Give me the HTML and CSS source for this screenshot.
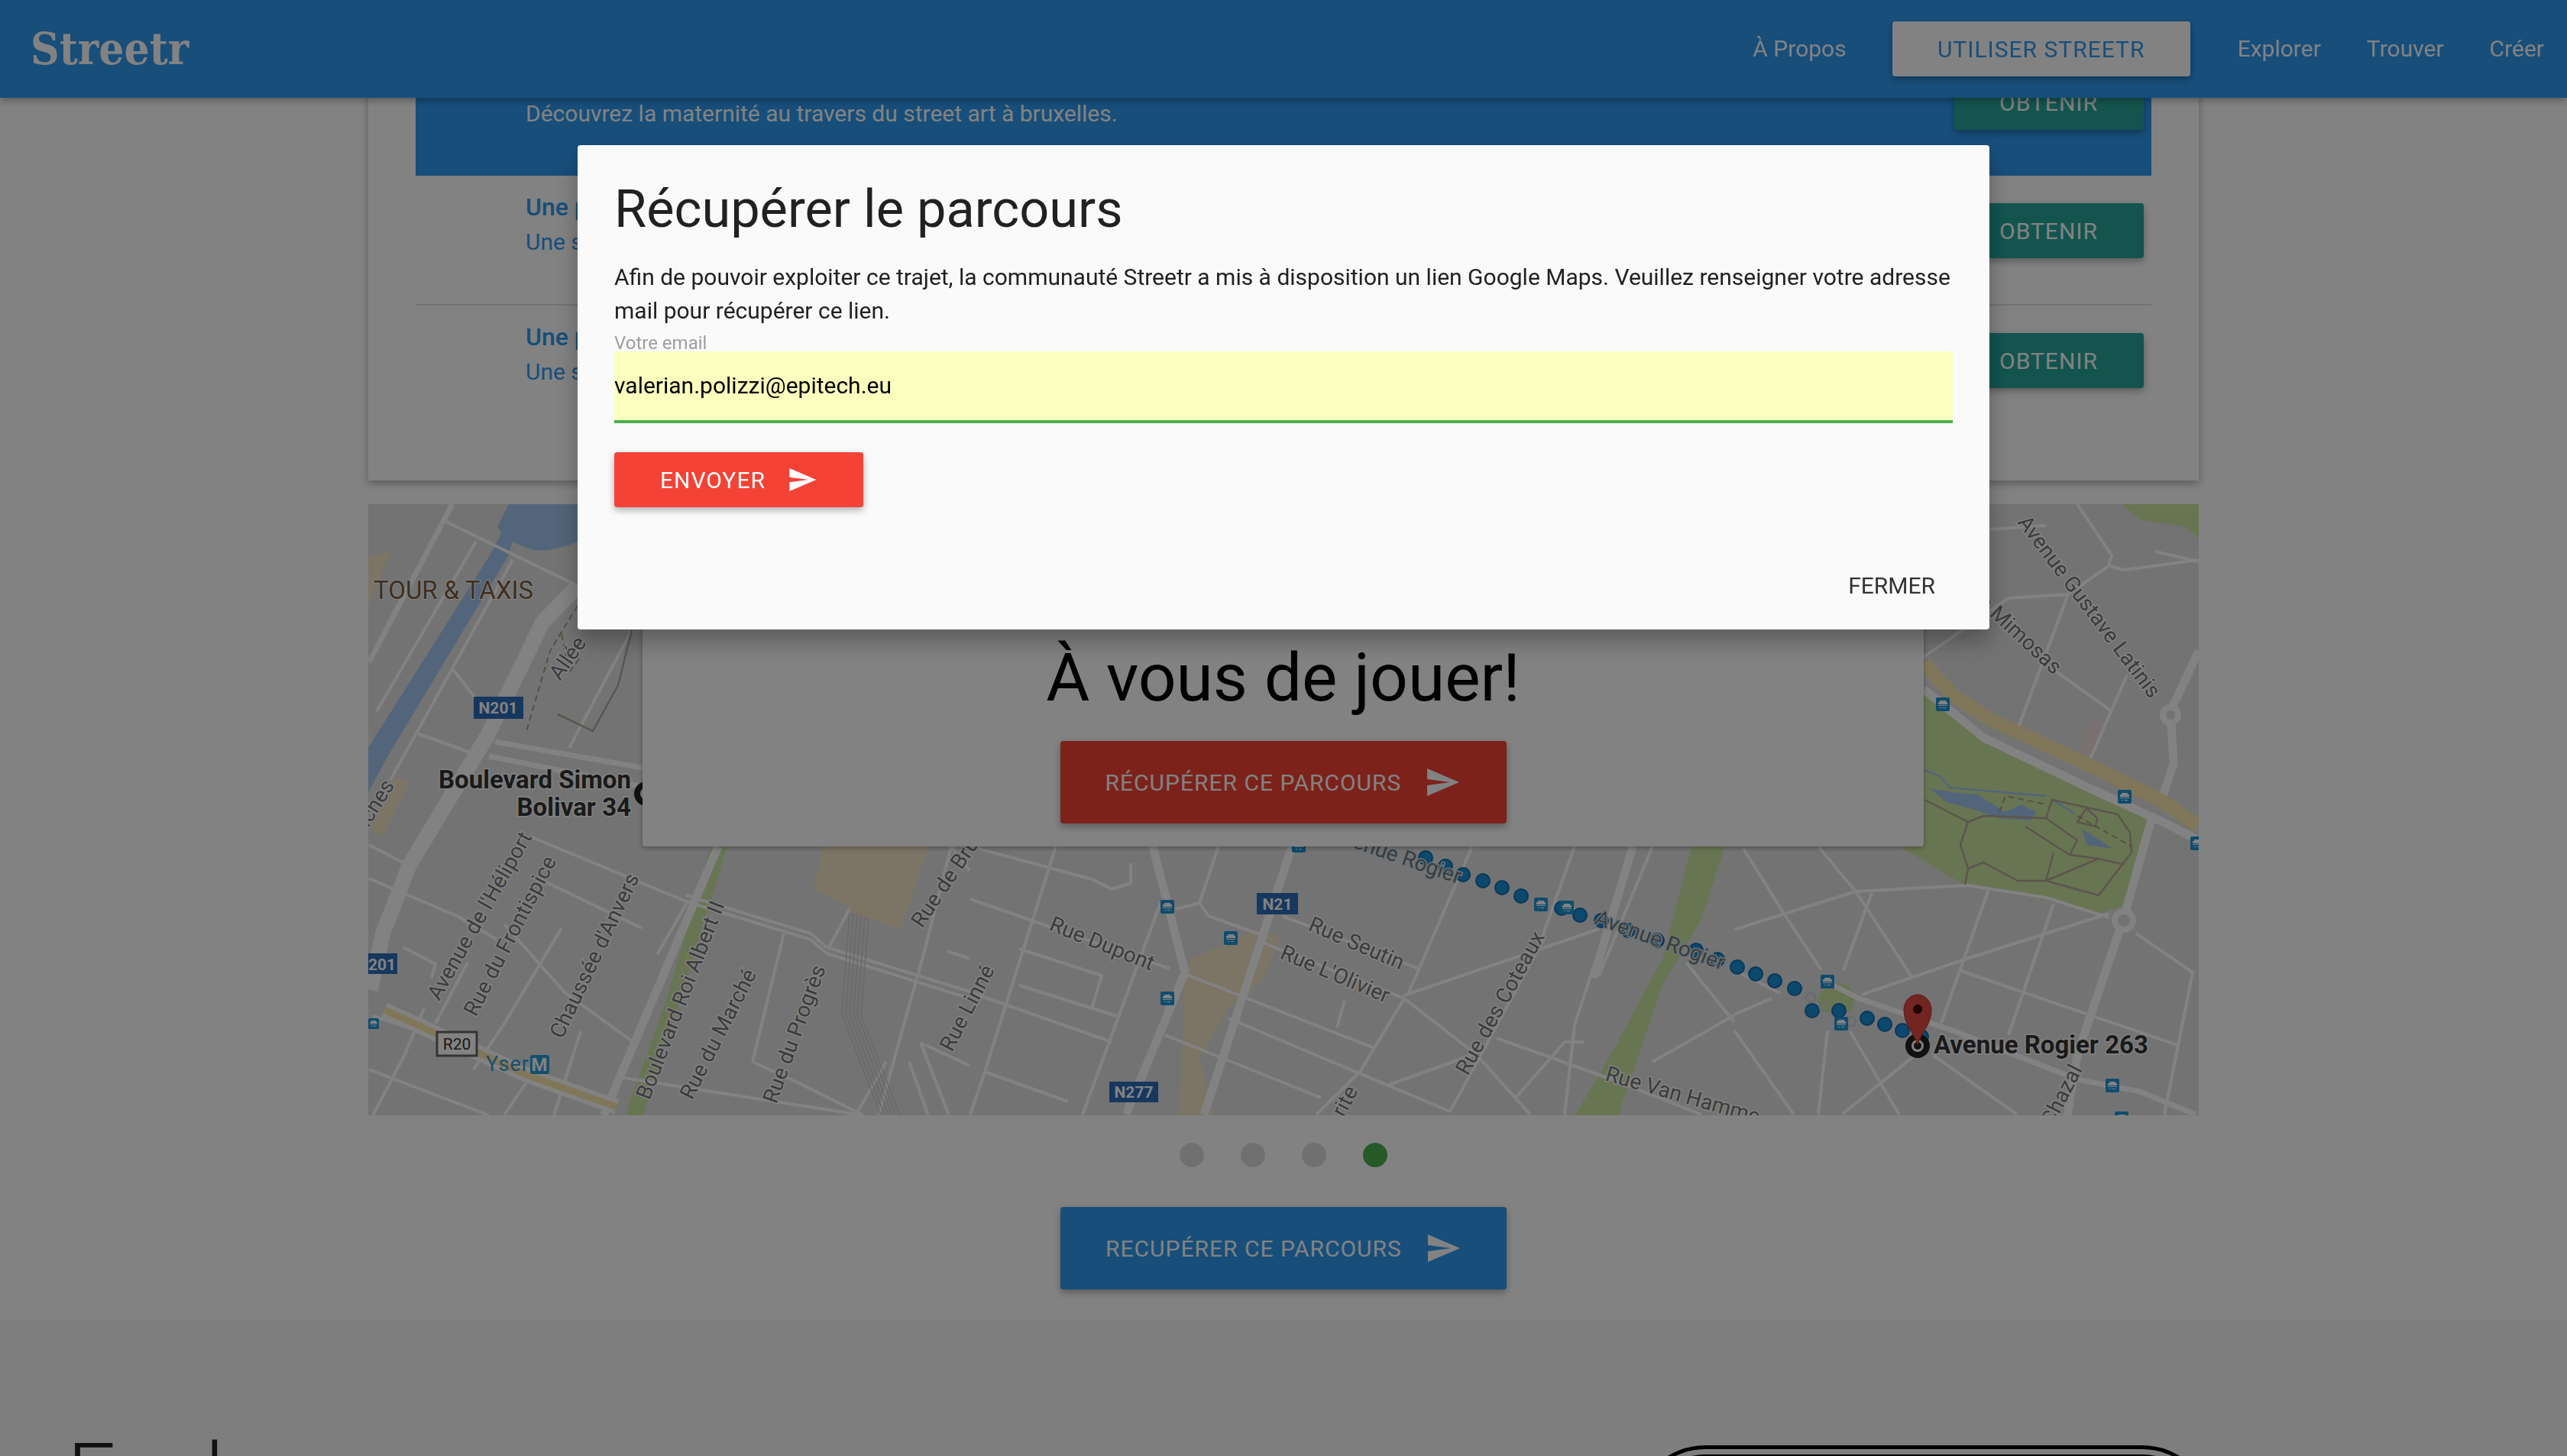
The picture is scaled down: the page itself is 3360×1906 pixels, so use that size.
FILE: index.html
```html
<!DOCTYPE html>
<html lang="fr">
<head>
<meta charset="utf-8">
<title>Streetr</title>
<link rel="stylesheet" href="styles.css">
</head>
<body>
<svg class="defs" width="0" height="0">
  <symbol id="send" viewBox="0 0 24 24"><path d="M2.01 21L2 14l15-2-15-2 .01-7L23 12z"/></symbol>
  <symbol id="transit" viewBox="0 0 18 18"><rect width="18" height="18" rx="2" fill="#1f95d6"/><path d="M5 4h8v2h2v3H3V6h2zM3 10h12v1H3zM5 13h2v1H5zM9 13h4v1H9z" fill="#fff"/></symbol>
</svg>

<header class="navbar">
  <a class="brand">Streetr</a>
  <nav class="nav-links">
    <a class="nav-link">À Propos</a>
    <a class="nav-cta">UTILISER STREETR</a>
    <a class="nav-link">Explorer</a>
    <a class="nav-link">Trouver</a>
    <a class="nav-link">Créer</a>
  </nav>
</header>

<main class="content">
  <section class="list-card">
    <div class="row row-active">
      <div class="row-text">
        <div class="row-title">Une balade</div>
        <div class="row-desc">Découvrez la maternité au travers du street art à bruxelles.</div>
      </div>
      <a class="btn btn-teal">OBTENIR</a>
    </div>
    <div class="row row-divided">
      <div class="row-text">
        <div class="row-title">Une promenade</div>
        <div class="row-desc">Une sortie</div>
      </div>
      <a class="btn btn-teal">OBTENIR</a>
    </div>
    <div class="row">
      <div class="row-text">
        <div class="row-title">Une promenade</div>
        <div class="row-desc">Une sortie</div>
      </div>
      <a class="btn btn-teal">OBTENIR</a>
    </div>
  </section>

  <section class="map">
    <svg class="map-svg" viewBox="482 660 2396 800" width="2396" height="800">
      <rect class="land" x="482" y="660" width="2396" height="800"/>
      <!-- areas -->
      <path class="water" d="M482 1037V979L646 719 656 698 651 690 666 660H756V709C735 718 715 722 700 720 690 718 680 714 671 709L664 730 511 984Z"/>
      <path class="park" d="M2518 902L2597 966 2817 1069 2780 1185 2743 1198 2690 1180 2572 1159 2486 1108H2518ZM2778 660H2878V706L2862 690 2800 680ZM2061 1460L2099 1398 2176 1255 2214 1108H2258L2227 1203 2176 1290 2118 1460ZM822 1449L873 1307 929 1111 952 1108 914 1232 842 1460H820ZM2380 1316C2376 1300 2395 1285 2410 1287 2425 1290 2430 1305 2425 1320 2410 1333 2390 1330 2380 1316Z"/>
      <path class="sand" d="M1551 1275L1560 1255 1646 1216 1678 1227 1653 1281 1608 1320 1570 1385 1589 1460H1544ZM1077 1108L1064 1164 1107 1185 1115 1195 1179 1217 1215 1108ZM482 730L512 722 482 790ZM512 1015L536 1024 500 1095 482 1082Z"/>
      <path class="pink" d="M2718 990L2738 943 2754 948 2733 1000Z"/>
      <!-- roads -->
      <path class="r" d="M582 682L756 767M623 709L493 931M671 733L511 1021M483 1106L539 1135M592 875L623 915M546 960L618 986M745 979L827 825M694 1095L898 1180M898 1180L1061 1230 1082 1248 1269 1307M705 1150L840 1215M483 1150L600 1200 650 1230M528 1240L570 1262 565 1280M660 1210L740 1300 826 1362M735 1215L660 1340 620 1400M555 1320L530 1380 488 1460M580 1360L488 1330M690 1415L660 1460M483 1400L640 1460M612 1260L570 1340M760 1350L725 1460M900 1180L860 1250M1026 1222L985 1390M985 1390L1050 1420 1130 1460M1112 1190L1085 1240M810 1410L1130 1460M1245 1108L1210 1245 1150 1460M1269 1140L1245 1108M1240 1245L1269 1255M1205 1365L1269 1395M1160 1390L1120 1460M1190 1390L1215 1460M1205 1365L1242 1460M898 1172L1061 1222 1082 1240 1269 1298"/>
      <path class="r" d="M1270 1108L1429 1151 1455 1164 1480 1156 1480 1130M1270 1177L1531 1268M1551 1275L1799 1372M1525 1355L1729 1437M1608 1333L1898 1455M1270 1299L1455 1364M1334 1242L1442 1277 1429 1320M1334 1290L1465 1331M1289 1403L1398 1442M1382 1108L1289 1403 1270 1459M1519 1182L1417 1459M1595 1108L1570 1182 1582 1199 1659 1227M1538 1190L1570 1182M1678 1199L1857 1268M1653 1234L1838 1307M1838 1307L1933 1381 2003 1459M1838 1307L1780 1403 1723 1459M1838 1303L2093 1216M1927 1108L1844 1299M2061 1108L2016 1234M2023 1225L1898 1455M1818 1420L1927 1381M1959 1359L2118 1416 2227 1459M1984 1437L2048 1364 2073 1364M2048 1459L2061 1342 2137 1108M2163 1108L2093 1277M2163 1390L2270 1329M2207 1260L2270 1338M1760 1310L1750 1345"/>
      <path class="r" d="M2270 1217L2429 1167 2576 1159 2678 1175 2760 1201M2270 1328L2319 1307M2282 1111L2335 1196 2384 1270M2380 1108L2429 1167 2503 1280M2450 1169L2413 1270M2437 1302L2568 1257 2760 1196M2603 1164L2541 1339M2688 1183L2629 1355M2564 1270L2850 1368M2796 1222L2870 1273 2833 1459M2380 1459L2392 1349M2411 1459L2507 1381M2421 1349L2486 1459M2270 1349L2348 1459M2518 860L2629 783 2707 778 2760 741 2764 727 2719 660M2762 741L2780 746 2878 733M2707 778L2639 960M2690 878L2764 931M2784 884L2733 1000M2605 693L2678 688M2821 722L2878 735M2330 1300L2270 1270M2530 1381L2640 1459"/>
      <path class="m" d="M648 971L841 1005M640 990L841 1030M592 660L483 867M2433 1307L2556 1349 2719 1413 2801 1429 2874 1459M2400 1290L2433 1307"/>
      <path class="t" d="M2878 852L2841 931 2845 1000 2829 1048M2817 1069L2780 1201 2719 1381 2706 1460M1509 1108L1551 1273 1474 1459M1691 1108L1576 1459M940 1108L790 1460M2137 1108L2086 1280M2518 902L2597 966 2731 1030 2829 1075 2878 1100"/>
      <path class="b" d="M756 767L710 815 638 963 536 1132 501 1222 485 1296"/>
      <circle class="ring" cx="2841" cy="936" r="10"/>
      <circle class="ring" cx="2780" cy="1205" r="12"/>
      <path class="yellow-edge" d="M503 1322L689 1407 807 1449"/>
      <path class="yellow" d="M503 1322L689 1407 807 1449"/>
      <path class="tan-road" d="M2518 868L2556 910 2605 942 2731 1000 2829 1048 2878 1082"/>
      <path class="lake" d="M2525 1032L2556 1037 2588 1040 2625 1063 2645 1053 2666 1063 2658 1074 2617 1071 2588 1061 2548 1050ZM2725 1085L2766 1111 2731 1106Z"/>
      <path class="stream" d="M2519 1008L2539 1016 2552 1031 2678 1042M2686 1047L2715 1065"/>
      <path class="park-path" d="M2519 1047L2576 1076 2596 1068 2678 1071 2686 1047 2772 1066 2788 1090 2790 1116 2747 1172 2678 1153 2641 1153 2596 1129 2576 1137 2566 1106 2576 1076M2651 1082L2709 1119 2719 1100 2678 1071M2688 1116L2678 1153 2747 1124 2780 1132M2709 1119L2747 1124M2731 1058L2745 1071 2743 1082 2719 1076 2731 1058M2576 1137L2572 1158"/>
      <path class="rail" d="M1112 1195L1102 1328 1153 1460M1117 1195L1107 1328 1158 1460M1122 1195L1112 1328 1163 1460M1127 1198L1117 1328 1168 1460M1132 1200L1122 1328 1173 1460M1137 1202L1127 1328 1178 1460"/>
      <path class="dash" d="M756 793L720 852 689 957M735 830L745 880 760 860M2617 1063L2625 1042 2678 1053M2719 1068L2790 1108"/>
      <path class="park-path" d="M827 825L809 897 776 957 730 935"/>

      <!-- labels -->
      <text class="area" x="489" y="784">TOUR &amp; TAXIS</text>
      <text class="street" transform="translate(733 892) rotate(-55)">Allée</text>
      <text class="street" text-anchor="end" transform="translate(517 1028) rotate(-58)">Quai des Péniches</text>
      <text class="street" transform="translate(575 1311) rotate(-60.5)">Avenue de l'Héliport</text>
      <text class="street" transform="translate(623 1332) rotate(-62.7)">Rue du Frontispice</text>
      <text class="street" transform="translate(736 1361) rotate(-64.5)">Chaussée d'Anvers</text>
      <text class="street" transform="translate(850 1441) rotate(-69)">Boulevard Roi Albert II</text>
      <text class="street" transform="translate(906 1441) rotate(-63)">Rue du Marché</text>
      <text class="street" transform="translate(1016 1446) rotate(-70)">Rue du Progrès</text>
      <text class="street" transform="translate(1207 1216) rotate(-56)">Rue de Bruxelles</text>
      <text class="street" transform="translate(1246 1378) rotate(-62.6)">Rue Linné</text>
      <text class="street" transform="translate(1372 1217) rotate(21.8)">Rue Dupont</text>
      <text class="street" transform="translate(1711 1217) rotate(23.4)">Rue Seutin</text>
      <text class="street" transform="translate(1674 1254) rotate(22.9)">Rue L'Olivier</text>
      <text class="street" transform="translate(1921 1409) rotate(-61)">Rue des Coteaux</text>
      <text class="street" transform="translate(2100 1414) rotate(16)">Rue Van Hamme</text>
      <text class="street" text-anchor="end" transform="translate(1778 1428) rotate(-62)">Rue de la Marguerite</text>
      <text class="street" text-anchor="end" transform="translate(2688 884) rotate(43)">Rue des Mimosas</text>
      <text class="street" transform="translate(2640 684) rotate(53)">Avenue Gustave Latinis</text>
      <text class="street" text-anchor="end" transform="translate(2726 1400) rotate(-63)">Rue Chazal</text>
      <g class="shield-blue"><rect x="620" y="912" width="65" height="29"/><rect x="480" y="1248" width="40" height="27"/><rect x="1645" y="1169" width="54" height="28"/><rect x="1452" y="1416" width="64" height="27"/></g>
      <text class="shield-text" x="652" y="934" text-anchor="middle">N201</text>
      <text class="shield-text" x="500" y="1270" text-anchor="middle">201</text>
      <text class="shield-text" x="1672" y="1191" text-anchor="middle">N21</text>
      <text class="shield-text" x="1484" y="1437" text-anchor="middle">N277</text>
      <rect class="shield-white" x="572" y="1351" width="52" height="31"/>
      <text class="shield-dark" x="598" y="1374" text-anchor="middle">R20</text>
      <text class="metro" x="636" y="1402" >Yser</text>
      <rect class="metro-box" x="694" y="1381" width="25" height="25" rx="3"/>
      <text class="metro-m" x="706" y="1402" text-anchor="middle">M</text>

      <!-- transit stops -->
      <use href="#transit" x="1519" y="1178" width="18" height="18"/>
      <use href="#transit" x="1602" y="1219" width="18" height="18"/>
      <use href="#transit" x="1519" y="1298" width="18" height="18"/>
      <use href="#transit" x="1691" y="1098" width="18" height="18"/>
      <use href="#transit" x="2534" y="913" width="18" height="18"/>
      <use href="#transit" x="2772" y="1034" width="18" height="18"/>
      <use href="#transit" x="2867" y="1095" width="18" height="18"/>
      <use href="#transit" x="2756" y="1412" width="18" height="18"/>
      <use href="#transit" x="2768" y="1455" width="18" height="18"/>
      <use href="#transit" x="482" y="1332" width="14" height="16"/>

      <!-- route -->
      <g class="route">
        <circle cx="1866" cy="1123" r="9"/><circle cx="1892" cy="1134" r="9"/><circle cx="1915" cy="1145" r="9"/><circle cx="1941" cy="1153" r="9"/><circle cx="1966" cy="1162" r="9"/><circle cx="1991" cy="1173" r="9"/><circle cx="2044" cy="1189" r="9"/><circle cx="2068" cy="1198" r="9"/><circle cx="2096" cy="1205" r="9"/><circle cx="2131" cy="1218" r="9"/><circle cx="2169" cy="1231" r="9"/><circle cx="2220" cy="1244" r="9"/><circle cx="2248" cy="1256" r="9"/><circle cx="2274" cy="1266" r="9"/><circle cx="2298" cy="1275" r="9"/><circle cx="2323" cy="1284" r="9"/><circle cx="2349" cy="1294" r="9"/><circle cx="2372" cy="1323" r="9"/><circle cx="2407" cy="1323" r="9"/><circle cx="2444" cy="1333" r="9"/><circle cx="2467" cy="1341" r="9"/><circle cx="2490" cy="1349" r="9"/><circle cx="2515" cy="1357" r="9"/>
      </g>
      <g class="stop-dots"><circle cx="2370" cy="1306" r="6"/><circle cx="2388" cy="1318" r="6"/><circle cx="2423" cy="1337" r="6"/></g>
      <use href="#transit" x="2008" y="1175" width="18" height="18"/>
      <use href="#transit" x="2042" y="1179" width="18" height="18"/>
      <use href="#transit" x="2383" y="1276" width="18" height="18"/>
      <use href="#transit" x="2401" y="1331" width="18" height="18"/>
      <text class="street street-blue" transform="translate(1740 1099) rotate(19)">Avenue Rogier</text>
      <text class="street street-blue" transform="translate(2086 1209) rotate(20)">Avenue Rogier</text>

      <!-- end points -->
      <circle class="target" cx="846" cy="1039" r="12"/>
      <circle class="target" cx="2510" cy="1369" r="12"/>
      <circle class="target-dot" cx="2510" cy="1369" r="5"/>
      <path class="pin" d="M2510 1368C2506 1352 2492 1342 2492 1322 2492 1311 2500 1302 2510 1302 2520 1302 2528 1311 2528 1322 2528 1342 2514 1352 2510 1368Z"/>
      <circle class="pin-eye" cx="2510" cy="1321" r="6"/>
      <text class="place" x="2531" y="1379">Avenue Rogier 263</text>
      <text class="place" x="826" y="1032" text-anchor="end">Boulevard Simon</text>
      <text class="place" x="826" y="1068" text-anchor="end">Bolivar 34</text>
    </svg>

    <div class="cta-card">
      <h2 class="cta-title">À vous de jouer!</h2>
      <a class="btn btn-large btn-red">RÉCUPÉRER CE PARCOURS <svg class="send send-large"><use href="#send"/></svg></a>
    </div>
  </section>

  <div class="dots">
    <span class="dot"></span><span class="dot"></span><span class="dot"></span><span class="dot dot-active"></span>
  </div>

  <div class="center-action">
    <a class="btn btn-large btn-blue">RECUPÉRER CE PARCOURS <svg class="send send-large"><use href="#send"/></svg></a>
  </div>
</main>

<section class="explore">
  <h2 class="explore-title">Explorer</h2>
  <div class="device"><div class="device-inner"></div></div>
</section>

<div class="overlay"></div>

<div class="modal">
  <div class="modal-body">
    <h4 class="modal-title">Récupérer le parcours</h4>
    <p class="modal-text">Afin de pouvoir exploiter ce trajet, la communauté Streetr a mis à disposition un lien Google Maps. Veuillez renseigner votre adresse mail pour récupérer ce lien.</p>
    <label class="field-label">Votre email</label>
    <div class="field-input">valerian.polizzi@epitech.eu</div>
    <a class="btn btn-send">ENVOYER <svg class="send"><use href="#send"/></svg></a>
  </div>
  <div class="modal-footer"><a class="modal-close">FERMER</a></div>
</div>
</body>
</html>
```
FILE: styles.css
```css
* { box-sizing: border-box; }
html, body { margin: 0; padding: 0; height: 1906px; overflow: hidden; }
body {
  width: 3360px;
  background: #fff;
  font-family: Roboto, "Noto Sans", sans-serif;
  color: #000;
}
.defs { position: absolute; }

/* navbar */
.navbar {
  position: fixed;
  top: 0; left: 0; right: 0;
  height: 128px;
  display: flex;
  align-items: center;
  justify-content: space-between;
  padding: 0 30px 0 40px;
  background: #2e9af0;
  color: #fff;
  box-shadow: 0 4px 10px rgba(0,0,0,.3);
  z-index: 5;
}
.brand {
  font-family: "DejaVu Serif Condensed", "DejaVu Serif", serif;
  font-size: 58px;
  font-weight: 700;
  line-height: 132px;
}
.nav-links { display: flex; align-items: center; padding-bottom: 2px; }
.nav-link { font-size: 30px; margin-left: 60px; }
.nav-cta {
  width: 390px;
  height: 72px;
  margin-left: 60px;
  margin-right: 2px;
  margin-top: 2px;
  display: flex;
  align-items: center;
  justify-content: center;
  background: #fff;
  color: #2e9af0;
  border-radius: 4px;
  font-size: 30px;
  letter-spacing: 1px;
  box-shadow: 0 4px 10px rgba(0,0,0,.3);
}
.nav-cta + .nav-link { margin-left: 60px; }

/* main */
.content {
  width: 2396px;
  margin: 0 auto;
  padding-top: 62px;
}
.list-card {
  height: 567px;
  padding: 0 62px;
  background: #fff;
  box-shadow: 0 4px 10px rgba(0,0,0,.3);
}
.row {
  display: flex;
  justify-content: space-between;
  height: 168px;
  padding: 36px 10px 0 144px;
  color: #2e9af0;
}
.row-active { background: #2e9af0; color: #fff; }
.row-divided { height: 170px; border-bottom: 2px solid #e0e0e0; }
.row-text { margin-top: -18px; }
.row-title { font-size: 32px; font-weight: 500; line-height: 46px; }
.row-desc { font-size: 30px; line-height: 46px; }

.btn {
  display: flex;
  align-items: center;
  color: #fff;
  border-radius: 4px;
  font-size: 30px;
  letter-spacing: 1px;
  box-shadow: 0 4px 10px rgba(0,0,0,.3);
}
.btn-teal {
  width: 248px;
  height: 72px;
  padding-left: 59px;
  background: #26a69a;
}
.btn-large {
  width: 584px;
  height: 108px;
  padding-left: 59px;
}
.btn-red { background: #f44336; }
.btn-blue { background: #2e9af0; }
.send { width: 40px; height: 40px; fill: #fff; margin-left: 28px; }
.send-large { width: 48px; height: 48px; margin-left: 30px; }

/* map */
.map {
  position: relative;
  width: 2396px;
  height: 800px;
  margin-top: 31px;
  overflow: hidden;
}
.map-svg { display: block; fill: none; }
.land { fill: #e2e2e2; }
.water, .lake { fill: #a3c6f0; }
.park { fill: #cce5a1; }
.sand { fill: #f3e3c7; }
.pink { fill: #f0dcdc; }
.r, .m, .t, .b, .rail, .dash, .park-path, .yellow, .yellow-edge, .tan-road, .stream { fill: none; stroke-linejoin: round; }
.r { stroke: #fff; stroke-width: 4; }
.m { stroke: #fff; stroke-width: 7; }
.t { stroke: #fff; stroke-width: 11; }
.b { stroke: #fff; stroke-width: 20; }
.ring { fill: #e2e2e2; stroke: #fff; stroke-width: 8; }
.yellow-edge { stroke: #fff; stroke-width: 20; }
.yellow { stroke: #fce9af; stroke-width: 9; }
.tan-road { stroke: #fbe9b0; stroke-width: 18; }
.stream { stroke: #a3c6f0; stroke-width: 2.5; }
.park-path { stroke: #b5a898; stroke-width: 2.5; }
.rail { stroke: #cfcfcf; stroke-width: 1.5; }
.dash { stroke: #a8a080; stroke-width: 2; stroke-dasharray: 8 5; }
.area { font: 400 33px Roboto, sans-serif; fill: #7a5a3c; stroke: #fff; stroke-width: 2; paint-order: stroke; }
.street { font: 400 28px Roboto, sans-serif; fill: #757575; stroke: #fff; stroke-width: 3; paint-order: stroke; }
.street-blue { stroke: #d0e4f0; }
.place { font: 700 33px Roboto, sans-serif; fill: #333; stroke: #fff; stroke-width: 3; paint-order: stroke; }
.shield-blue rect { fill: #2c6db8; }
.shield-text { font: 700 21px Roboto, sans-serif; fill: #fff; }
.shield-white { fill: #fff; stroke: #666; stroke-width: 3; }
.shield-dark { font: 400 21px Roboto, sans-serif; fill: #333; }
.metro { font: 400 27px Roboto, sans-serif; fill: #2a9cd8; letter-spacing: 1px; }
.metro-box { fill: #2a9cd8; }
.metro-m { font: 700 24px Roboto, sans-serif; fill: #fff; }
.route circle { fill: #1a8ed6; stroke: #0f6fae; stroke-width: 2; }
.stop-dots circle { fill: none; stroke: #d5d5d5; stroke-width: 3; }
.target { fill: #fff; stroke: #222; stroke-width: 8; }
.target-dot { fill: #222; }
.pin { fill: #e04a42; stroke: #b53a33; stroke-width: 1; }
.pin-eye { fill: #3e0505; }

.cta-card {
  position: absolute;
  left: 359px;
  bottom: 352px;
  width: 1677px;
  height: 360px;
  display: flex;
  flex-direction: column;
  align-items: center;
  justify-content: flex-end;
  padding-bottom: 30px;
  background: #fff;
  border-radius: 4px;
  box-shadow: 0 2px 6px rgba(0,0,0,.3);
}
.cta-title {
  margin: 0 0 28px;
  font-size: 87.5px;
  font-weight: 400;
  line-height: 110px;
}

/* dots */
.dots {
  display: flex;
  justify-content: center;
  gap: 48px;
  margin-top: 36px;
}
.dot { width: 32px; height: 32px; border-radius: 50%; background: #dcdcdc; }
.dot-active { background: #4caf50; }
.center-action { display: flex; justify-content: center; margin-top: 52px; height: 148px; }

/* bottom section */
.explore {
  display: flex;
  justify-content: space-between;
  height: 178px;
  overflow: hidden;
  padding: 136px 463px 0 88px;
  background: #f8f8f8;
}
.explore-title { margin: 0; font-size: 112px; font-weight: 300; line-height: 132px; color: #222; }
.device {
  width: 758px;
  height: 400px;
  margin-top: 28px;
  padding: 7px;
  border: 5px solid #000;
  border-radius: 93px;
}
.device-inner { height: 100%; border: 5px solid #000; border-radius: 81px; }

/* modal */
.overlay {
  position: fixed;
  inset: 0;
  background: rgba(0,0,0,.49);
  z-index: 10;
}
.modal {
  position: fixed;
  left: 756px;
  top: 190px;
  width: 1848px;
  height: 634px;
  display: flex;
  flex-direction: column;
  justify-content: space-between;
  background: #fafafa;
  border-radius: 4px;
  box-shadow: 0 16px 30px rgba(0,0,0,.3);
  z-index: 11;
}
.modal-body { padding: 44px 48px 0; }
.modal-title {
  margin: 0 0 27px;
  font-size: 68.5px;
  font-weight: 400;
  line-height: 80px;
  color: #212121;
}
.modal-text {
  margin: 0;
  font-size: 30px;
  line-height: 44px;
  color: #212121;
}
.field-label {
  display: block;
  margin-top: 9px;
  font-size: 24px;
  line-height: 22px;
  color: #9e9e9e;
}
.field-input {
  width: 1752px;
  height: 94px;
  padding-top: 20px;
  background: #faffbd;
  border-bottom: 4px solid #4caf50;
  font-size: 30px;
  line-height: 50px;
  color: #000;
}
.btn-send {
  width: 326px;
  height: 72px;
  margin-top: 38px;
  padding-left: 60px;
  background: #f44336;
}
.modal-footer {
  display: flex;
  justify-content: flex-end;
  padding: 0 71px 39px 0;
}
.modal-close { font-size: 30px; line-height: 36px; color: #333; }
```
